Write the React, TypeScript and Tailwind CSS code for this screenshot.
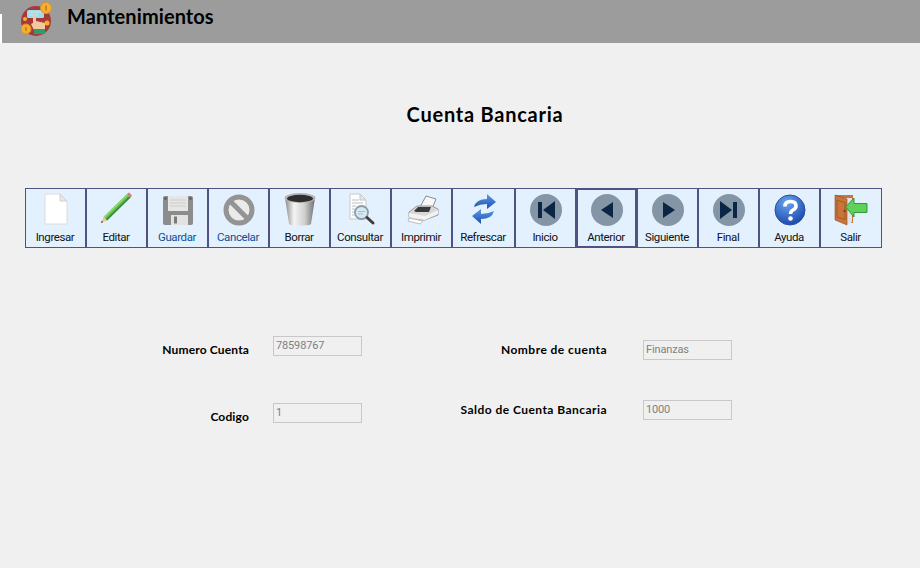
import type { ReactNode } from 'react';

const gothic = { fontFamily: 'Lato, "Open Sans", sans-serif' };

function Logo() {
  return (
    <svg width="34" height="34" viewBox="0 0 34 34" className="self-start mt-[2px]">
      <circle cx="15" cy="19" r="15" fill="#a63a38" />
      <rect x="6" y="8" width="17" height="8" rx="1.500" fill="#9fdcea" />
      <path d="M8 10h13M8 13h9" stroke="#c4ecf4" />
      <path d="M12 12h3v7l9 2v7H13l-3-6 2-1z" fill="#f3c7a0" />
      <rect x="13" y="27" width="11" height="5" fill="#2f9c6c" />
      <circle cx="25" cy="6" r="5.500" fill="#f4b02e" stroke="#e0902a" />
      <circle cx="5" cy="27" r="5" fill="#f4b02e" stroke="#e0902a" />
      <circle cx="26" cy="21" r="2.500" fill="#f4b02e" />
      <circle cx="4" cy="17" r="2" fill="#f4b02e" />
      <path d="M25 3.500v5M5 25v4" stroke="#b06a18" strokeWidth="1.200" />
    </svg>
  );
}

function PageIcon() {
  return (
    <svg width="32" height="34" viewBox="0 0 32 34">
      <path d="M5 2h15l7 7v23H5z" fill="#fff" stroke="#dcdcdc" />
      <path d="M20 2v7h7z" fill="#e8e8e8" stroke="#d0d0d0" />
    </svg>
  );
}

function PencilIcon() {
  return (
    <svg width="34" height="34" viewBox="0 0 34 34">
      <path d="M3.500 25L27 2l3.500 3.500L7 28.500z" fill="#5cb84c" />
      <path d="M3.500 25L27 2l1.200 1.200L4.700 26.200z" fill="#93d87e" />
      <path d="M6 27.500L29.500 4.500l1 1L7 28.500z" fill="#2e8a32" />
      <path d="M27 2l2-1.500 3 3-1.500 2z" fill="#d87a74" />
      <path d="M3.500 25L7 28.500 1 31z" fill="#e8c89a" />
      <path d="M1 31l.8-2.200 1.400 1.300z" fill="#333" />
    </svg>
  );
}

function FloppyIcon() {
  return (
    <svg width="32" height="32" viewBox="0 0 32 32">
      <rect x="1" y="2" width="30" height="29" rx="2" fill="#8c8c8c" />
      <rect x="6" y="2" width="20" height="15" fill="#e6e6e6" />
      <path d="M8 6h16M8 9h16M8 12h16" stroke="#cdcdcd" />
      <rect x="9" y="21" width="17" height="10" fill="#e2e2e2" />
      <rect x="12" y="22.500" width="3" height="7" fill="#7a7a7a" />
      <rect x="2.500" y="3.500" width="2" height="2" fill="#4a4a4a" />
      <rect x="27.500" y="3.500" width="2" height="2" fill="#4a4a4a" />
    </svg>
  );
}

function BlockedIcon() {
  return (
    <svg width="32" height="32" viewBox="0 0 32 32">
      <circle cx="16" cy="16" r="13" fill="#eaeaea" stroke="#949494" strokeWidth="5" />
      <path d="M7 7l18 18" stroke="#949494" strokeWidth="5" />
    </svg>
  );
}

function TrashIcon() {
  return (
    <svg width="34" height="34" viewBox="0 0 34 34">
      <defs>
        <linearGradient id="bin" x1="0" x2="1" y1="0" y2="0">
          <stop offset="0" stopColor="#8a8a8a" />
          <stop offset=".3" stopColor="#f4f4f4" />
          <stop offset=".65" stopColor="#d0d0d0" />
          <stop offset="1" stopColor="#6f6f6f" />
        </linearGradient>
      </defs>
      <path d="M2 6l4 26q1 1.500 11 1.500t11-1.500l4-26z" fill="url(#bin)" />
      <ellipse cx="17" cy="6" rx="15.500" ry="5" fill="#b5b5b5" />
      <ellipse cx="17" cy="6.500" rx="13" ry="3.700" fill="#2e2e2e" />
    </svg>
  );
}

function SearchDocIcon() {
  return (
    <svg width="34" height="34" viewBox="0 0 34 34">
      <path d="M6 2h10l6 6v19H6z" fill="#fdfdfd" stroke="#c9c9c9" />
      <path d="M16 2v6h6z" fill="#dfe6ee" stroke="#c9c9c9" />
      <path d="M8 8h7M8 11h11M8 14h4M8 17h3M8 20h3M8 23h3" stroke="#b9c2cc" />
      <circle cx="17.500" cy="20.500" r="6.500" fill="#d5e9f5" stroke="#8f9aa5" strokeWidth="1.800" />
      <path d="M14 19.500h7M14 22h5" stroke="#a9bccb" />
      <path d="M23 25.500l6 5.500" stroke="#3d3d3d" strokeWidth="3" strokeLinecap="round" />
    </svg>
  );
}

function PrinterIcon() {
  return (
    <svg width="34" height="34" viewBox="0 0 34 34">
      <path d="M15 15L21 4l10 3-4 10z" fill="#f8f8f8" stroke="#8c8c8c" />
      <path d="M4 20l8-6h15l6 3v6l-13 5H7l-3-3z" fill="#d8d8d8" stroke="#9a9a9a" />
      <path d="M9 19l4-4h13l-2 5H11z" fill="#3a3a3a" />
      <path d="M4 21l16 3 13-6v4l-13 6-16-3z" fill="#f2f2f2" />
      <path d="M4 26l14 3-3 3-12-3z" fill="#fff" stroke="#bdbdbd" />
    </svg>
  );
}

function RefreshIcon() {
  return (
    <svg width="32" height="34" viewBox="0 0 32 34">
      <defs>
        <linearGradient id="arrow" x1="0" x2="0" y1="0" y2="1">
          <stop offset="0" stopColor="#5f9ae6" />
          <stop offset="1" stopColor="#1c4fb4" />
        </linearGradient>
      </defs>
      <path d="M6 15Q8 7 19 7V2l9 8-9 7v-5q-7 0-13 3z" fill="url(#arrow)" />
      <path d="M26 19q-2 8-13 8v5l-9-8 9-7v5q7 0 13-3z" fill="url(#arrow)" />
    </svg>
  );
}

function NavIcon({ children }: { children: ReactNode }) {
  return (
    <svg width="32" height="32" viewBox="0 0 32 32">
      <circle cx="16" cy="16" r="16" fill="#8496a6" />
      <g fill="#0b2644">{children}</g>
    </svg>
  );
}

function HelpIcon() {
  return (
    <svg width="32" height="32" viewBox="0 0 32 32">
      <defs>
        <radialGradient id="globe" cx=".4" cy=".25" r=".85">
          <stop offset="0" stopColor="#6aa4ee" />
          <stop offset="1" stopColor="#123fa8" />
        </radialGradient>
      </defs>
      <circle cx="16" cy="16" r="15" fill="url(#globe)" stroke="#274f9e" />
      <path d="M11 12.500Q11 7.500 16.500 7.500T22 12q0 2.500-3 4-2.500 1.200-2.500 4" fill="none" stroke="#fff" strokeWidth="3.600" />
      <circle cx="16.500" cy="24.500" r="2.300" fill="#fff" />
    </svg>
  );
}

function ExitIcon() {
  return (
    <svg width="34" height="34" viewBox="0 0 34 34">
      <path d="M1 3h18v28h-2V6H1z" fill="#c2773c" />
      <path d="M12 6h6v24l-6 3z" fill="#dfe3e6" />
      <path d="M1 3l12 4v26L1 28z" fill="#c9743a" stroke="#8f4f20" strokeWidth=".6" />
      <path d="M3 8l8 2.500v17L3 25z" fill="none" stroke="#a35a28" />
      <circle cx="10.500" cy="19" r="1" fill="#6b3512" />
      <path d="M11.700 15L20 6v5.500h13v9H20V25z" fill="#5fd05a" stroke="#2f9a38" />
    </svg>
  );
}

const tools: { label: string; icon: ReactNode; width?: string; blue?: boolean; active?: boolean }[] = [
  { label: 'Ingresar', icon: <PageIcon /> },
  { label: 'Editar', icon: <PencilIcon /> },
  { label: 'Guardar', icon: <FloppyIcon />, blue: true },
  { label: 'Cancelar', icon: <BlockedIcon />, blue: true },
  { label: 'Borrar', icon: <TrashIcon /> },
  { label: 'Consultar', icon: <SearchDocIcon /> },
  { label: 'Imprimir', icon: <PrinterIcon /> },
  { label: 'Refrescar', icon: <RefreshIcon />, width: 'w-[63px]' },
  { label: 'Inicio', icon: <NavIcon><rect x="8" y="8" width="4" height="16" /><path d="M25 7v18L13 16z" /></NavIcon> },
  { label: 'Anterior', icon: <NavIcon><path d="M22 8v16L10 16z" /></NavIcon>, active: true },
  { label: 'Siguiente', icon: <NavIcon><path d="M11 8v16l12-8z" /></NavIcon> },
  { label: 'Final', icon: <NavIcon><path d="M7 7v18l12-9z" /><rect x="20" y="8" width="4" height="16" /></NavIcon> },
  { label: 'Ayuda', icon: <HelpIcon /> },
  { label: 'Salir', icon: <ExitIcon />, width: 'w-[62px]' },
];

function ToolButton({ label, icon, width, blue, active }: (typeof tools)[number]) {
  return (
    <div
      className={`${width ?? 'w-[61px]'} h-[60px] shrink-0 flex flex-col items-center bg-[#e3f1ff] border-[#4f5283] ${active ? 'border-2' : 'border'}`}
    >
      <div className={`h-[42px] flex items-end justify-center pb-[5px] ${active ? '-mt-px' : ''}`}>{icon}</div>
      <span
        className={`-mt-px -ml-px text-[11.5px] leading-[14px] tracking-[-0.4px] whitespace-nowrap ${blue ? 'text-[#0e4f96]' : 'text-[#111]'}`}
        style={{ fontFamily: 'Roboto, sans-serif' }}
      >
        {label}
      </span>
    </div>
  );
}

function Field({ label, value, labelClass, gap }: { label: string; value: string; labelClass: string; gap: string }) {
  return (
    <div className={`flex items-center ${gap}`}>
      <label className={`${labelClass} text-right text-[12px] font-bold text-black whitespace-nowrap`} style={gothic}>
        {label}
      </label>
      <div
        className="w-[89px] h-[20px] bg-[#f0f0f0] border border-[#c8c8c8] pl-[2px] text-[11px] leading-[18px] tracking-[-0.15px] text-[#808080]"
        style={{ fontFamily: 'Roboto, sans-serif' }}
      >
        {value}
      </div>
    </div>
  );
}

export default function App() {
  const leftLabel = 'w-[150px] translate-y-[4px] tracking-[0.15px]';
  const rightLabel = 'w-[160px] tracking-[0.45px]';

  return (
    <div className="w-[920px] h-[568px] overflow-hidden bg-[#f0f0f0]">
      <div className="relative h-[43px] bg-[#9c9c9c] flex items-center pl-[21px] gap-[12px]">
        <div className="absolute left-0 top-[14px] w-[2px] h-[29px] bg-white" />
        <Logo />
        <h1 className="-mt-[11px] text-[20px] font-bold leading-[28px] tracking-[0.08px] text-black" style={gothic}>
          Mantenimientos
        </h1>
      </div>

      <h2 className="mt-[57px] pl-[50px] text-center text-[20px] font-bold leading-[28px] tracking-[0.75px] text-black" style={gothic}>
        Cuenta Bancaria
      </h2>

      <div className="mt-[60px] pl-[25px] flex">
        {tools.map((tool) => (
          <ToolButton key={tool.label} {...tool} />
        ))}
      </div>

      <div className="mt-[88px] pl-[99px] flex items-start">
        <div className="flex flex-col gap-[47px]">
          <Field label="Numero Cuenta" value="78598767" labelClass={leftLabel} gap="gap-[24px]" />
          <Field label="Codigo" value="1" labelClass={leftLabel} gap="gap-[24px]" />
        </div>
        <div className="ml-[85px] mt-[4px] flex flex-col gap-[40px]">
          <Field label="Nombre de cuenta" value="Finanzas" labelClass={rightLabel} gap="gap-[36px]" />
          <Field label="Saldo de Cuenta Bancaria" value="1000" labelClass={rightLabel} gap="gap-[36px]" />
        </div>
      </div>
    </div>
  );
}
